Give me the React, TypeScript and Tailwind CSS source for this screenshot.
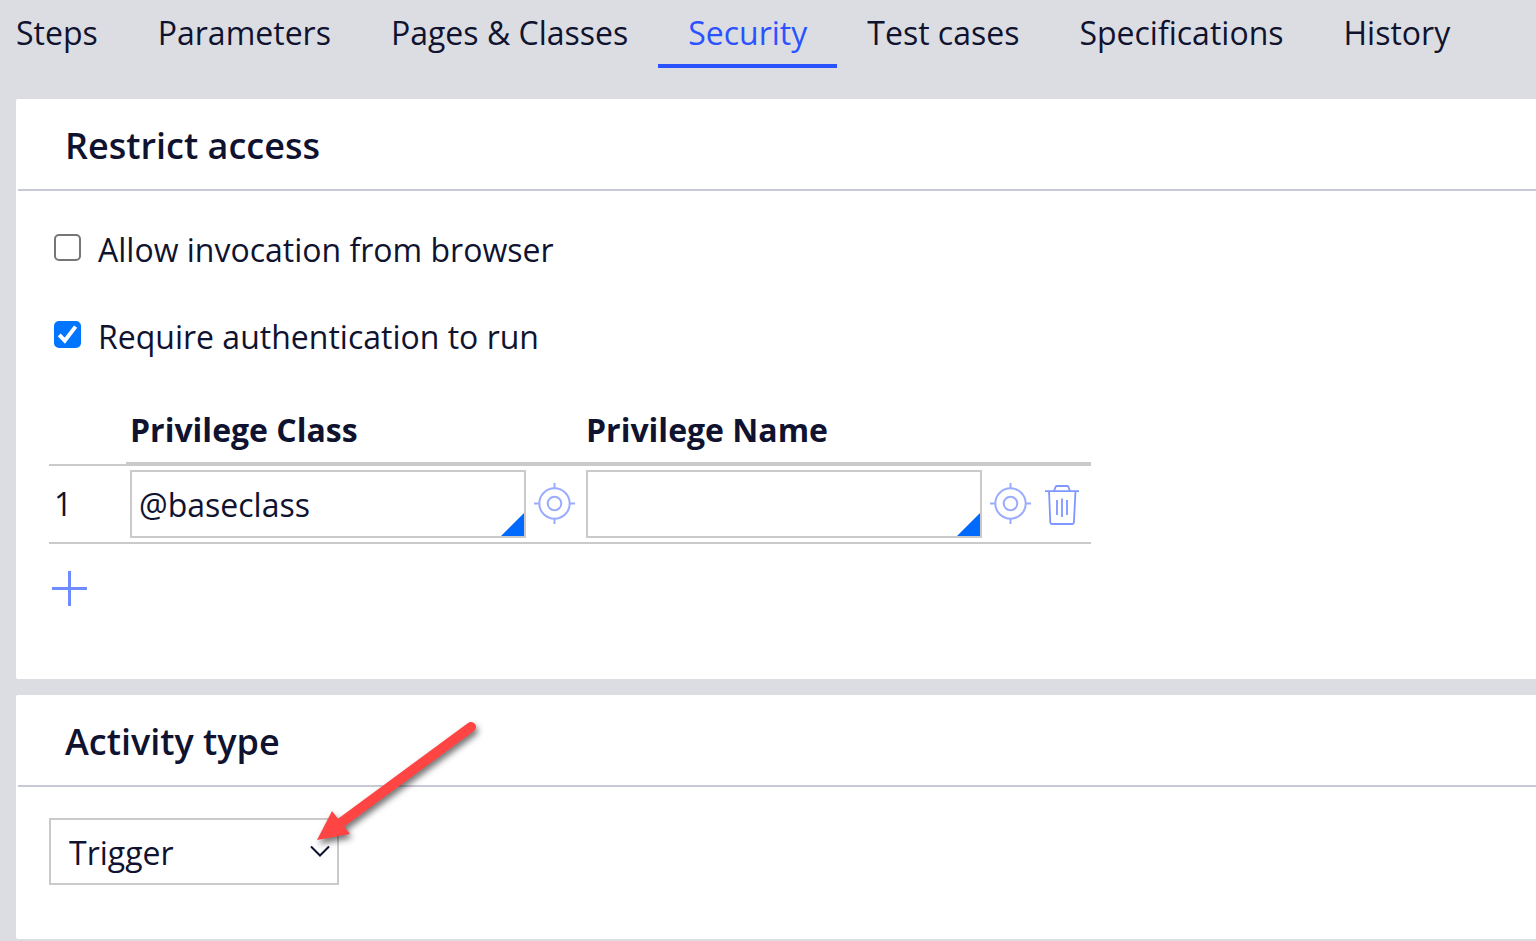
import { useState } from 'react';

const tabs = [
  'Steps',
  'Parameters',
  'Pages & Classes',
  'Security',
  'Test cases',
  'Specifications',
  'History',
];

export default function App() {
  const [activeTab, setActiveTab] = useState('Security');
  const [allowBrowser, setAllowBrowser] = useState(false);
  const [requireAuth, setRequireAuth] = useState(true);
  const [privilegeClass, setPrivilegeClass] = useState('@baseclass');
  const [privilegeName, setPrivilegeName] = useState('');

  return (
    <div className="min-h-screen overflow-x-hidden bg-[#dcdde2] pb-0.5 font-['Open_Sans',sans-serif] text-[32px] leading-[44px] text-[#10132f]">
      <nav className="flex" role="tablist">
        {tabs.map((tab) => (
          <button
            key={tab}
            type="button"
            role="tab"
            aria-selected={tab === activeTab}
            onClick={() => setActiveTab(tab)}
            className={`shrink-0 whitespace-nowrap border-b-4 px-[30px] pt-[11px] pb-[9px] first:pl-4 ${
              tab === activeTab ? 'border-[#2b52ff] text-[#2b52ff]' : 'border-transparent'
            }`}
          >
            {tab}
          </button>
        ))}
      </nav>

      <main className="mt-[31px] flex flex-col gap-4 pl-4">
        <Panel title="Restrict access">
          <div className="flex flex-col items-start gap-[43px] pt-[37px] pl-[38px]">
            <Checkbox
              label="Allow invocation from browser"
              checked={allowBrowser}
              onChange={setAllowBrowser}
            />
            <Checkbox
              label="Require authentication to run"
              checked={requireAuth}
              onChange={setRequireAuth}
            />
          </div>

          <div className="pt-[49px] pb-[73px] pl-[33px]">
            <table className="w-[1042px] table-fixed border-separate border-spacing-0 text-left">
              <colgroup>
                <col className="w-[77px]" />
                <col className="w-[456px]" />
                <col className="w-[456px]" />
                <col />
              </colgroup>
              <thead>
                <tr>
                  <th className="border-b-2 border-[#cacaca]" />
                  <th className="border-b-4 border-[#cacaca] px-1 pt-0 pb-2.5 font-bold">
                    Privilege Class
                  </th>
                  <th className="border-b-4 border-[#cacaca] px-1 pt-0 pb-2.5 font-bold">
                    Privilege Name
                  </th>
                  <th className="border-b-4 border-[#cacaca]" />
                </tr>
              </thead>
              <tbody>
                <tr>
                  <td className="border-b-2 border-[#cacaca] px-[5px] py-1">1</td>
                  <td className="border-b-2 border-[#cacaca] p-1">
                    <PickerField
                      label="Privilege Class"
                      value={privilegeClass}
                      onChange={setPrivilegeClass}
                    />
                  </td>
                  <td className="border-b-2 border-[#cacaca] p-1">
                    <PickerField
                      label="Privilege Name"
                      value={privilegeName}
                      onChange={setPrivilegeName}
                    />
                  </td>
                  <td className="border-b-2 border-[#cacaca] pt-1.5 pb-1 pl-[7px]">
                    <button type="button" aria-label="Delete row" className="block">
                      <TrashIcon />
                    </button>
                  </td>
                </tr>
              </tbody>
            </table>

            <button type="button" aria-label="Add row" className="mt-[27px] ml-[3px] block">
              <svg width="35" height="35" viewBox="0 0 35 35" stroke="#6e8bff" strokeWidth="3">
                <path d="M17.5 0v35M0 17.5h35" />
              </svg>
            </button>
          </div>
        </Panel>

        <Panel title="Activity type">
          <div className="pt-[31px] pb-[54px] pl-[33px]">
            <div className="relative w-[290px]">
              <select
                aria-label="Activity type"
                defaultValue="Trigger"
                className="block h-[67px] w-full appearance-none border-2 border-[#cacaca] bg-white pt-0.5 pl-[18px]"
              >
                <option>Trigger</option>
                <option>Activity</option>
                <option>Utility</option>
              </select>
              <svg
                className="pointer-events-none absolute top-[27px] right-2"
                width="22"
                height="13"
                viewBox="0 0 22 13"
                fill="none"
                stroke="#10132f"
                strokeWidth="2"
              >
                <path d="M2 1.5l9 9 9-9" />
              </svg>
              <Arrow />
            </div>
          </div>
        </Panel>
      </main>
    </div>
  );
}

function Panel({ title, children }: { title: string; children: React.ReactNode }) {
  return (
    <section className="rounded-l-[2px] bg-white">
      <h2 className="ml-0.5 border-b-2 border-[#c8c9d6] pt-[22px] pb-[18px] pl-[47px] text-[36px] leading-[50px] font-semibold">
        {title}
      </h2>
      {children}
    </section>
  );
}

interface CheckboxProps {
  label: string;
  checked: boolean;
  onChange: (checked: boolean) => void;
}

function Checkbox({ label, checked, onChange }: CheckboxProps) {
  return (
    <label className="flex items-center gap-[17px]">
      <span className="relative mb-1.5 block size-[27px]">
        <input
          type="checkbox"
          checked={checked}
          onChange={(e) => onChange(e.target.checked)}
          className="block size-full appearance-none rounded-[5px] border-2 border-[#767676] bg-white checked:border-[#0075ff] checked:bg-[#0075ff]"
        />
        {checked && (
          <svg
            className="pointer-events-none absolute inset-0"
            width="27"
            height="27"
            viewBox="0 0 27 27"
            fill="none"
            stroke="#fff"
            strokeWidth="4"
          >
            <path d="M5.2 13.8l5.6 5.9L21.6 5.6" />
          </svg>
        )}
      </span>
      {label}
    </label>
  );
}

interface PickerFieldProps {
  label: string;
  value: string;
  onChange: (value: string) => void;
}

function PickerField({ label, value, onChange }: PickerFieldProps) {
  return (
    <div className="flex items-center gap-2">
      <div className="relative w-[396px]">
        <input
          type="text"
          aria-label={label}
          value={value}
          onChange={(e) => onChange(e.target.value)}
          className="block h-[68px] w-full border-2 border-[#cacaca] bg-white px-[7px]"
        />
        {/* autocomplete corner */}
        <svg
          className="pointer-events-none absolute right-0.5 bottom-0.5"
          width="23"
          height="23"
          viewBox="0 0 23 23"
          fill="#006aff"
        >
          <path d="M23 0v23H0z" />
        </svg>
      </div>
      <button type="button" aria-label={`Open ${label}`} className="block pb-0.5">
        <TargetIcon />
      </button>
    </div>
  );
}

function TargetIcon() {
  return (
    <svg width="41" height="41" viewBox="0 0 41 41" fill="none" stroke="#9aacff" strokeWidth="2">
      <circle cx="20.5" cy="20.5" r="15.2" />
      <circle cx="20.5" cy="20.5" r="6.8" />
      <path d="M20.5 0v5.5M20.5 35.5V41M0 20.5h5.5M35.5 20.5H41" />
    </svg>
  );
}

function TrashIcon() {
  return (
    <svg
      width="34"
      height="40"
      viewBox="0 0 34 40"
      fill="none"
      stroke="#7f97ff"
      strokeWidth="1.8"
      strokeLinejoin="round"
    >
      <path d="M0 6.1h34" />
      <path d="M9 6l1.6-4.1Q11 1 12 1h10q1 0 1.4.9L25 6" />
      <path d="M4 6l1.3 31.4q.1 1.6 1.6 1.6h20.4q1.5 0 1.6-1.6L30.5 6" />
      <path d="M12 15v15M17 13.5V32M22 15v15" />
    </svg>
  );
}

function Arrow() {
  return (
    <svg
      className="pointer-events-none absolute -top-[103px] left-[261px] drop-shadow-[2px_4px_3px_rgba(0,0,0,0.55)]"
      width="180"
      height="140"
      viewBox="0 0 180 140"
    >
      <path d="M161 12L32 107" stroke="#ff4444" strokeWidth="10" strokeLinecap="round" />
      <path d="M7 125L22 96 40 119z" fill="#ff4444" />
    </svg>
  );
}
